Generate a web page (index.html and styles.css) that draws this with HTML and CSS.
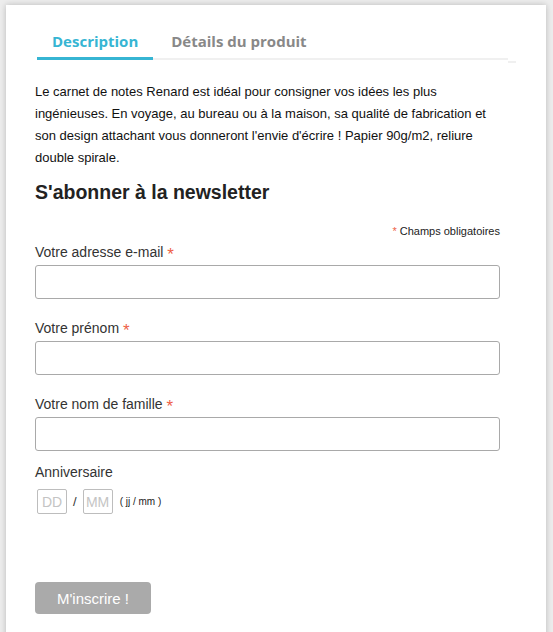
FILE: index.html
```html
<!DOCTYPE html>
<html lang="fr">
<head>
<meta charset="utf-8">
<title>Renard</title>
<link rel="stylesheet" href="styles.css">
</head>
<body>
<div class="card">
  <div class="tabs">
    <a class="tab active">Description</a>
    <a class="tab">Détails du produit</a>
  </div>
  <p class="desc">Le carnet de notes Renard est idéal pour consigner vos idées les plus ingénieuses. En voyage, au bureau ou à la maison, sa qualité de fabrication et son design attachant vous donneront l'envie d'écrire ! Papier 90g/m2, reliure double spirale.</p>
  <h2 class="title">S'abonner à la newsletter</h2>
  <div class="required-note"><span class="star">*</span> Champs obligatoires</div>
  <div class="field">
    <label class="label">Votre adresse e-mail <span class="star big">*</span></label>
    <input class="input" type="text">
  </div>
  <div class="field">
    <label class="label">Votre prénom <span class="star big">*</span></label>
    <input class="input" type="text">
  </div>
  <div class="field">
    <label class="label">Votre nom de famille <span class="star big">*</span></label>
    <input class="input" type="text">
  </div>
  <div class="field birthday">
    <label class="label">Anniversaire</label>
    <div class="date-row">
      <input class="date" type="text" placeholder="DD">
      <span class="slash">/</span>
      <input class="date" type="text" placeholder="MM">
      <span class="hint">( jj / mm )</span>
    </div>
  </div>
  <button class="submit" type="button">M'inscrire !</button>
</div>
</body>
</html>
```

FILE: styles.css
```css
html, body {
  margin: 0;
  padding: 0;
  background: #ededed;
  height: 100%;
  overflow: hidden;
}

.card {
  background: #fff;
  margin: 5px 7px 0 6px;
  min-height: 700px;
  padding: 26px 46px 40px 29px;
  box-shadow: 0 0 6px rgba(0, 0, 0, 0.22);
  font-family: "Liberation Sans", Arial, sans-serif;
}

.tabs {
  display: flex;
  gap: 3px;
  margin: 0 -8px 0 2px;
  border-bottom: 2px solid #f0f0f0;
  position: relative;
}

.tabs::after {
  content: "";
  position: absolute;
  right: -8px;
  bottom: -5px;
  width: 8px;
  height: 2px;
  background: #f0f0f0;
}

.tab {
  font-family: "Open Sans", sans-serif;
  font-weight: 700;
  font-size: 15px;
  line-height: 20px;
  padding: 0 15px 6px 15px;
  color: #888;
  border-bottom: 3px solid transparent;
  margin-bottom: -2px;
}

.tab.active {
  color: #36b5d3;
  border-bottom-color: #36b5d3;
}

.desc {
  margin: 21px 0 0;
  font-size: 13px;
  line-height: 22px;
  color: #111;
}

.title {
  margin: 11px 0 0;
  font-size: 19.5px;
  line-height: 24px;
  font-weight: 700;
  color: #222;
}

.required-note {
  margin-top: 20px;
  text-align: right;
  font-size: 11px;
  line-height: 14px;
  color: #222;
}

.star {
  color: #ee5f48;
}

.star.big {
  font-size: 17px;
  line-height: 0;
  vertical-align: -3px;
}

.field {
  display: flex;
  flex-direction: column;
  margin-top: 6px;
}

.field + .field {
  margin-top: 21px;
}

.field.birthday {
  margin-top: 13px;
}

.label {
  font-size: 14px;
  line-height: 17px;
  height: 17px;
  color: #333;
}

.input {
  margin-top: 4px;
  height: 34px;
  box-sizing: border-box;
  border: 1px solid #a9a9a9;
  border-radius: 3px;
  background: #fff;
  padding: 0 8px;
  font: 14px "Liberation Sans", Arial, sans-serif;
}

.date-row {
  display: flex;
  align-items: center;
  margin-top: 8px;
  padding-left: 2px;
}

.date {
  width: 30px;
  height: 25px;
  box-sizing: border-box;
  border: 1px solid #bdbdbd;
  border-radius: 2px;
  padding: 0;
  text-align: center;
  font: 14px "Liberation Sans", Arial, sans-serif;
  color: #333;
}

.date::placeholder {
  color: #c4c4c4;
}

.slash {
  font-size: 13px;
  color: #333;
  margin: 0 6px;
}

.hint {
  font-size: 10px;
  color: #222;
  margin-left: 7px;
}

.submit {
  display: block;
  margin-top: 68px;
  width: 116px;
  height: 32px;
  border: none;
  border-radius: 4px;
  background: #aaa;
  color: #fff;
  font: 15px "Liberation Sans", Arial, sans-serif;
  padding: 0;
}
```
